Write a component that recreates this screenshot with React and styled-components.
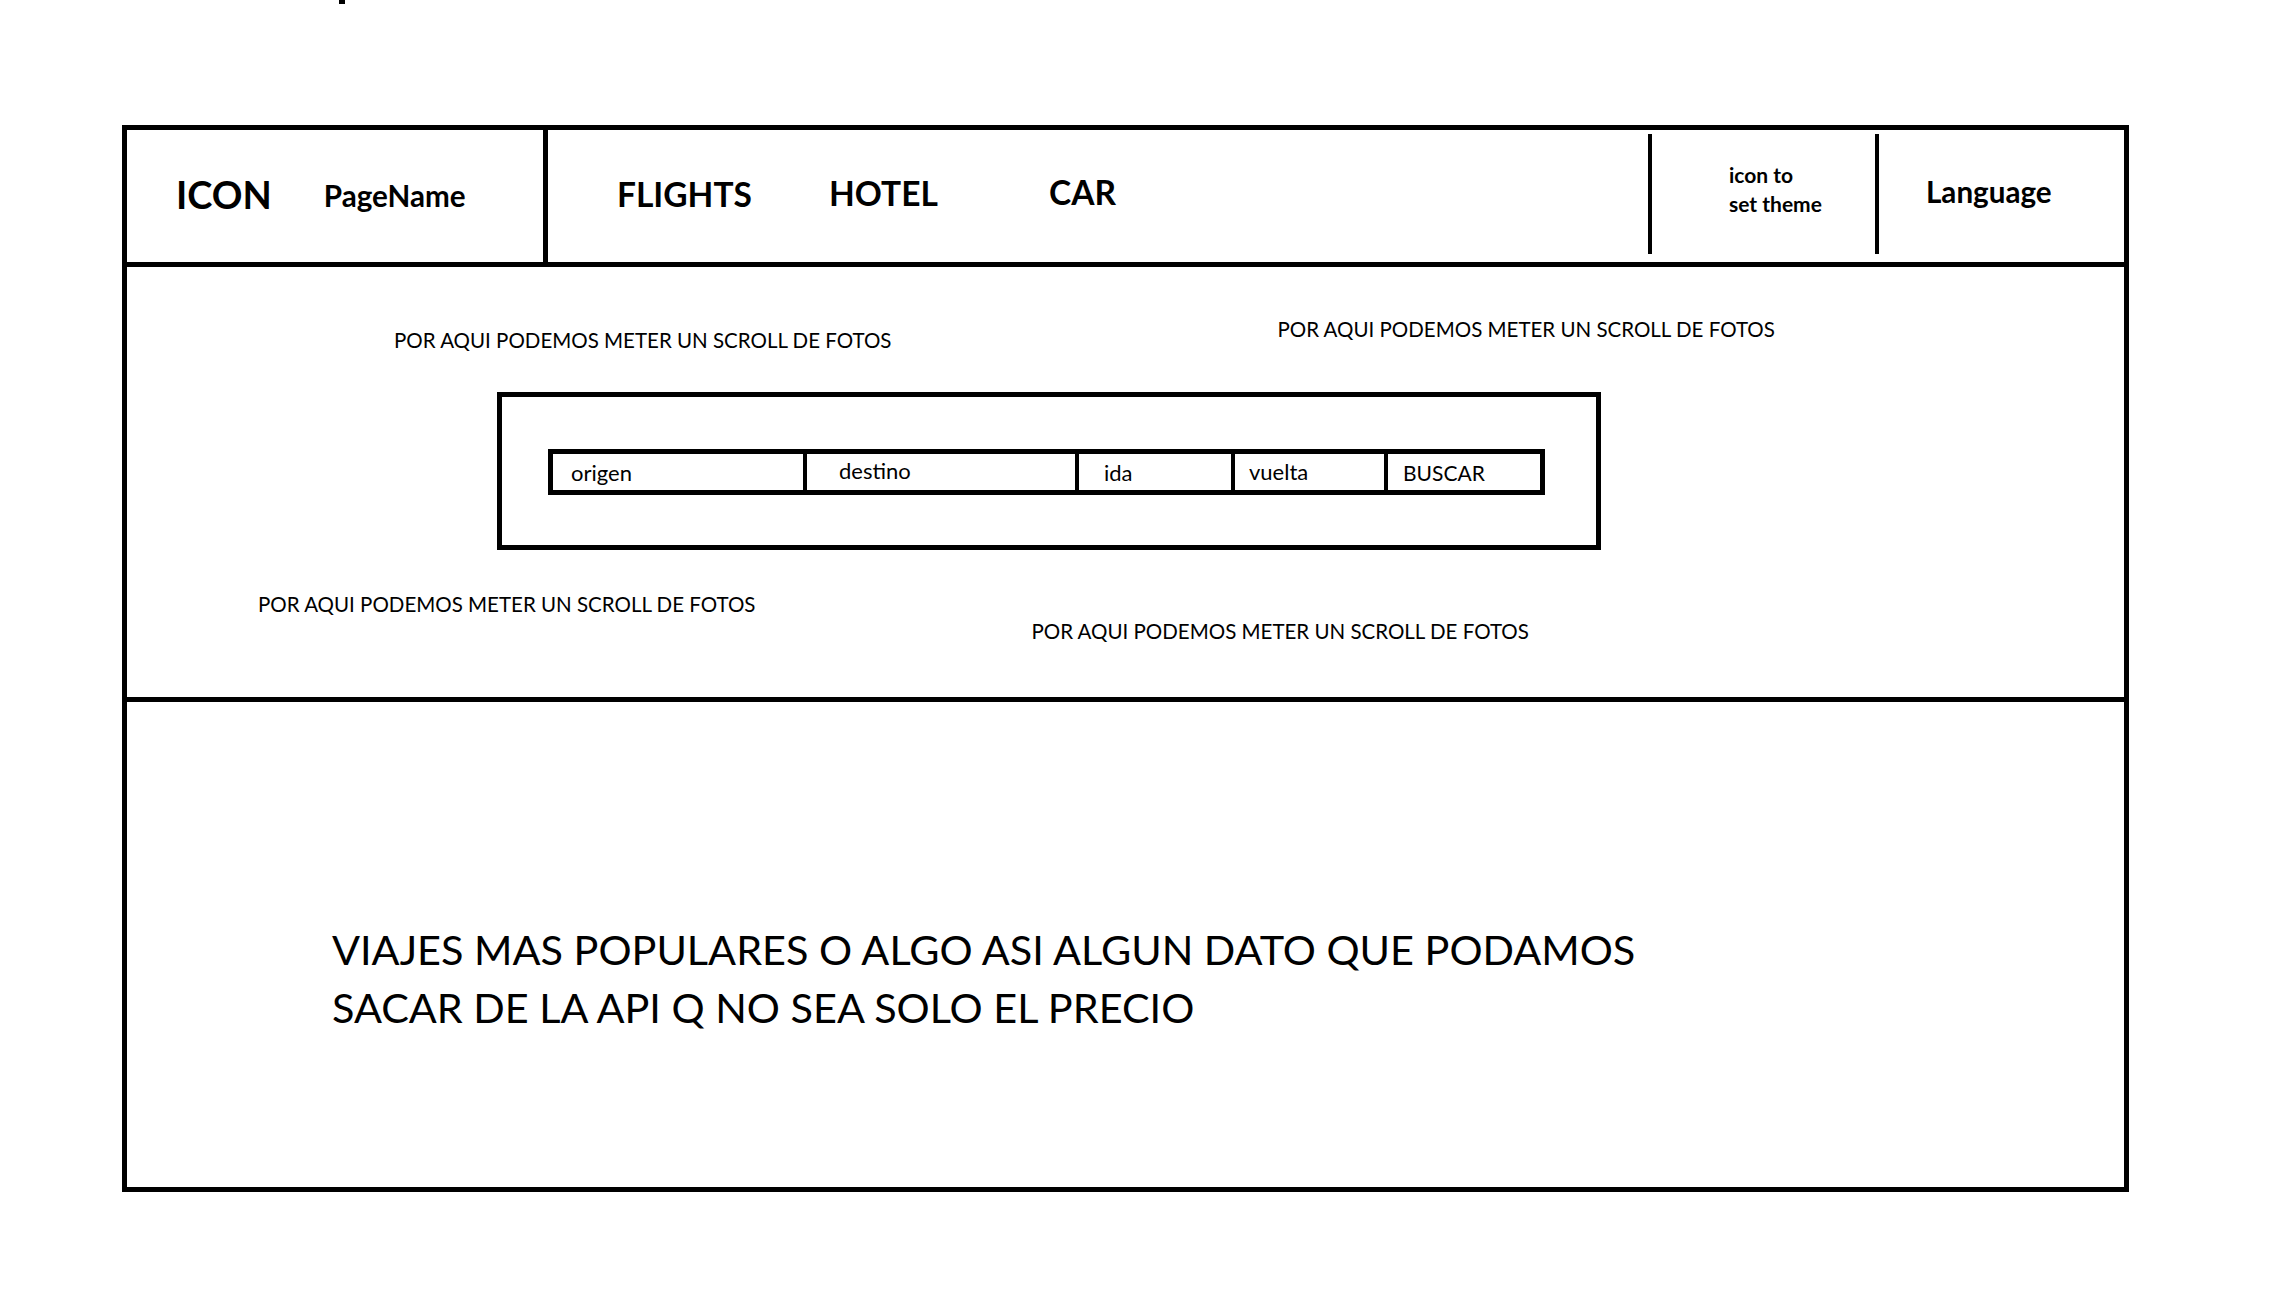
import React from 'react';
import styled, { createGlobalStyle } from 'styled-components';

const GlobalStyle = createGlobalStyle`
  html, body {
    margin: 0;
    padding: 0;
    background: #fff;
  }
  body {
    font-family: Lato, "Open Sans", "Liberation Sans", sans-serif;
    color: #000;
  }
`;

const App = () => {
  return (
    <Page>
      <GlobalStyle />
      <TopStrip>
        <Stub />
      </TopStrip>

      <Frame>
        {/* Header */}
        <Header>
          <Brand>
            <Logo>ICON</Logo>
            <PageName>PageName</PageName>
          </Brand>

          <Nav>
            <NavLink $lift={4}>FLIGHTS</NavLink>
            <NavLink $lift={7}>HOTEL</NavLink>
            <NavLink $lift={9}>CAR</NavLink>
          </Nav>

          <Divider />
          <ThemeCell>
            <span>icon to</span>
            <span>set theme</span>
          </ThemeCell>
          <Divider />
          <LanguageCell>Language</LanguageCell>
        </Header>

        {/* Hero with search */}
        <Hero>
          <LabelRow $top={49} $left={267} $gap={386}>
            <PhotoNote $shift={11}>POR AQUI PODEMOS METER UN SCROLL DE FOTOS</PhotoNote>
            <PhotoNote>POR AQUI PODEMOS METER UN SCROLL DE FOTOS</PhotoNote>
          </LabelRow>

          <SearchBox>
            <SearchBar>
              <SearchCell $pad={18}>origen</SearchCell>
              <SearchCell $pad={32} $lift={4}>destino</SearchCell>
              <SearchCell $pad={25} $lift={-4}>ida</SearchCell>
              <SearchCell $pad={14} $lift={2}>vuelta</SearchCell>
              <SearchCell $pad={15} $size={21}>BUSCAR</SearchCell>
            </SearchBar>
          </SearchBox>

          <LabelRow $top={41} $left={131} $gap={276}>
            <PhotoNote>POR AQUI PODEMOS METER UN SCROLL DE FOTOS</PhotoNote>
            <PhotoNote $shift={27}>POR AQUI PODEMOS METER UN SCROLL DE FOTOS</PhotoNote>
          </LabelRow>
        </Hero>

        {/* Popular trips */}
        <Popular>
          <PopularText>
            VIAJES MAS POPULARES O ALGO ASI ALGUN DATO QUE PODAMOS
            <br />
            SACAR DE LA API Q NO SEA SOLO EL PRECIO
          </PopularText>
        </Popular>
      </Frame>
    </Page>
  );
};

// Styled Components
const Page = styled.div`
  width: 2276px;
  min-height: 1298px;
  padding-left: 122px;
  box-sizing: border-box;
`;

const TopStrip = styled.div`
  height: 125px;
`;

const Stub = styled.div`
  width: 6px;
  height: 4px;
  margin-left: 217px;
  background: #000;
`;

const Frame = styled.div`
  width: 2007px;
  height: 1067px;
  box-sizing: border-box;
  border: 5px solid #000;
  display: flex;
  flex-direction: column;
`;

const Header = styled.header`
  height: 137px;
  flex-shrink: 0;
  box-sizing: border-box;
  border-bottom: 5px solid #000;
  display: flex;
  align-items: stretch;
`;

const Brand = styled.div`
  width: 421px;
  box-sizing: border-box;
  display: flex;
  align-items: center;
  padding-left: 49px;
  padding-bottom: 4px;
  gap: 52px;
  border-right: 5px solid #000;
`;

const Logo = styled.span`
  font-size: 38px;
  font-weight: 700;
`;

const PageName = styled.span`
  font-size: 29.6px;
  font-weight: 700;
  margin-top: 2px;
`;

const Nav = styled.nav`
  width: 1100px;
  box-sizing: border-box;
  padding-left: 69px;
  display: grid;
  grid-template-columns: 212px 220px auto;
  align-items: center;
`;

const NavLink = styled.span`
  font-size: 33.5px;
  font-weight: 700;
  padding-bottom: ${p => p.$lift || 0}px;
`;

const Divider = styled.div`
  width: 4px;
  background: #000;
  margin: 4px 0 8px;
`;

const ThemeCell = styled.div`
  width: 223px;
  box-sizing: border-box;
  padding-left: 77px;
  padding-bottom: 15px;
  display: flex;
  flex-direction: column;
  justify-content: center;
  font-size: 21px;
  font-weight: 700;
  line-height: 29px;
`;

const LanguageCell = styled.div`
  flex: 1;
  display: flex;
  align-items: center;
  padding-left: 47px;
  padding-bottom: 9px;
  font-size: 29.6px;
  font-weight: 700;
`;

const Hero = styled.section`
  height: 435px;
  flex-shrink: 0;
  box-sizing: border-box;
  border-bottom: 5px solid #000;
  display: flex;
  flex-direction: column;
  align-items: flex-start;
`;

const LabelRow = styled.div`
  display: flex;
  align-items: flex-start;
  padding-top: ${p => p.$top}px;
  padding-left: ${p => p.$left}px;
  gap: ${p => p.$gap}px;
`;

const PhotoNote = styled.span`
  font-size: 20.5px;
  line-height: 26px;
  margin-top: ${p => p.$shift || 0}px;
  white-space: nowrap;
`;

const SearchBox = styled.div`
  margin-top: 39px;
  margin-left: 370px;
  width: 1104px;
  height: 158px;
  box-sizing: border-box;
  border: 5px solid #000;
  padding: 52px 51px 50px 46px;
`;

const SearchBar = styled.div`
  height: 46px;
  box-sizing: border-box;
  border: 5px solid #000;
  display: grid;
  grid-template-columns: 250px 272px 156px 153px 1fr;
`;

const SearchCell = styled.div`
  display: flex;
  align-items: center;
  padding-left: ${p => p.$pad}px;
  padding-bottom: ${p => p.$lift || 0}px;
  font-size: ${p => p.$size || 22}px;

  & + & {
    border-left: 4px solid #000;
  }
`;

const Popular = styled.section`
  flex: 1;
  padding: 218px 0 0 205px;
`;

const PopularText = styled.p`
  margin: 0;
  font-size: 41.4px;
  line-height: 58px;
`;

export default App;
